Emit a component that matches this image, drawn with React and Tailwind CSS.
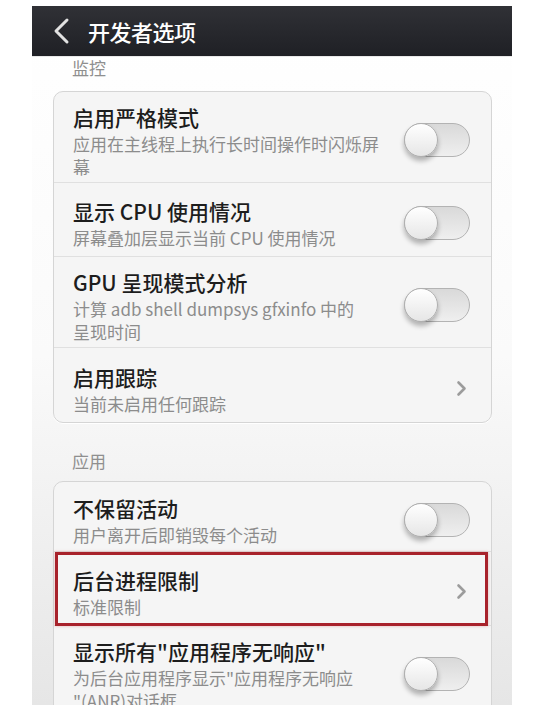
import React from "react"

const font = { fontFamily: '"Noto Sans CJK SC", "Noto Sans", sans-serif' }

const Toggle = () => (
  <div className="relative w-[66px] h-[34px] shrink-0 rounded-full border border-[#b3b3b3] bg-linear-to-b from-[#d9d9d9] to-[#efefef]">
    <div className="absolute -left-px -top-px w-[34px] h-[34px] rounded-full border border-[#b0b0b0] bg-linear-to-b from-white to-[#e6e6e6] shadow-[0_4px_5px_rgba(0,0,0,0.28)]" />
  </div>
)

const Chevron = () => (
  <svg className="w-[11px] h-[17px] shrink-0 mr-[3px]" viewBox="0 0 11 17" fill="none" stroke="#9c9c9c" strokeWidth="2.6" strokeLinecap="round" strokeLinejoin="round">
    <path d="M2.5 2.5 L8.5 8.5 L2.5 14.5" />
  </svg>
)

const Row = ({ title, lines, control, highlight, last, short }) => (
  <div className={`relative flex items-center ${short ? "min-h-[70px]" : "min-h-[74px]"} pl-[19px] pr-[21px] pt-[10px] pb-[4px] ${last ? "" : "border-b border-[#e0e0e0]"}`}>
    <div className="flex-1">
      <div className="text-[21px] leading-[30px] font-medium text-[#1d1d1d]">{title}</div>
      {lines.map((l) => (
        <div key={l} className="text-[17px] leading-[23px] text-[#8c8c8c] whitespace-nowrap">{l}</div>
      ))}
    </div>
    {control === "toggle" ? <Toggle /> : <Chevron />}
    {/* red annotation box */}
    {highlight && (
      <div className="absolute top-0 -bottom-px left-px right-[3px] border-[3px] border-[#a8222b] shadow-[0_0_3px_rgba(200,60,60,0.35)] pointer-events-none" />
    )}
  </div>
)

const Card = ({ children }) => (
  <div className="ml-[21px] mr-[20px] rounded-[10px] border border-[#d5d5d5] bg-[#f5f5f5] shadow-[0_1px_0_#fff]">
    {children}
  </div>
)

export default function App() {
  return (
    <div className="h-[705px] overflow-hidden bg-white pt-[6px]" style={font}>
      <div className="ml-[32px] w-[480px] h-[699px] flex flex-col bg-linear-to-b from-white via-[#fafafa] to-[#e6e6e6]">
        {/* Header */}
        <div className="h-[51px] shrink-0 flex items-center pl-[20px] bg-linear-to-b from-[#303136] to-[#1f2025] border-b border-[#e8e8e8]">
          <svg className="w-[18px] h-[28px]" viewBox="0 0 18 28" fill="none" stroke="#e2e2e2" strokeWidth="3" strokeLinecap="round" strokeLinejoin="round">
            <path d="M15 3 L4 14 L15 25" />
          </svg>
          <span className="ml-[18px] text-[22px] leading-none font-medium text-white tracking-[-0.5px]">开发者选项</span>
        </div>

        <div className="pl-[40px] text-[17px] leading-[22px] text-[#8f8f8f]">监控</div>

        <div className="mt-[12px]">
          <Card>
            <Row title="启用严格模式" lines={["应用在主线程上执行长时间操作时闪烁屏", "幕"]} control="toggle" />
            <Row title="显示 CPU 使用情况" lines={["屏幕叠加层显示当前 CPU 使用情况"]} control="toggle" />
            <Row title="GPU 呈现模式分析" lines={["计算 adb shell dumpsys gfxinfo 中的", "呈现时间"]} control="toggle" />
            <Row title="启用跟踪" lines={["当前未启用任何跟踪"]} control="chevron" last />
          </Card>
        </div>

        <div className="mt-[27px] pl-[40px] text-[17px] leading-[22px] text-[#8f8f8f]">应用</div>

        <div className="mt-[9px]">
          <Card>
            <Row title="不保留活动" lines={["用户离开后即销毁每个活动"]} control="toggle" short />
            <Row title="后台进程限制" lines={["标准限制"]} control="chevron" highlight />
            <Row title={'显示所有"应用程序无响应"'} lines={['为后台应用程序显示"应用程序无响应', '"(ANR)对话框']} control="toggle" last />
          </Card>
        </div>
      </div>
    </div>
  )
}
